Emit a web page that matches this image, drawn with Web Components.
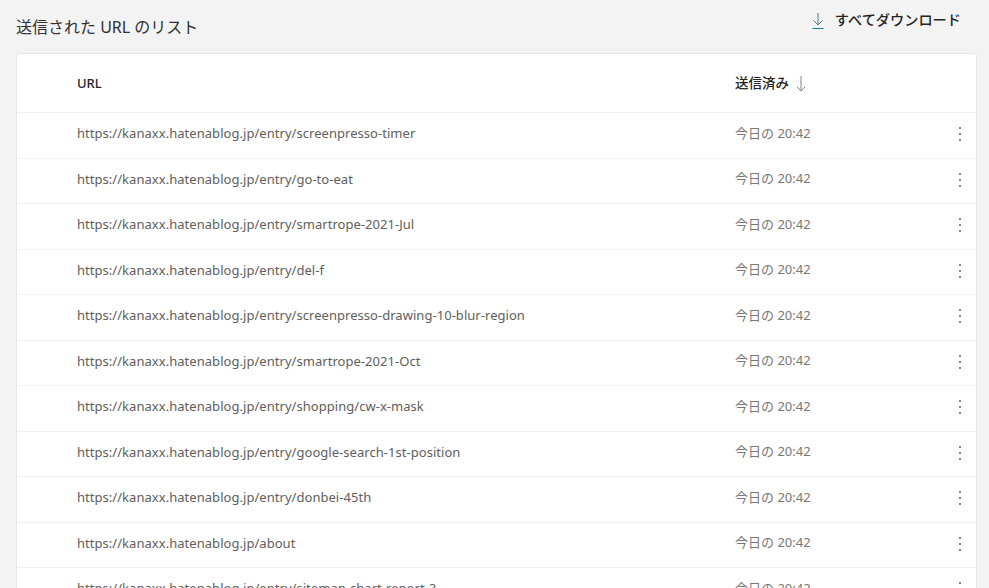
<!DOCTYPE html>
<html lang="ja">
<head>
<meta charset="utf-8">
<title>送信された URL のリスト</title>
<style>
  html, body { margin: 0; height: 588px; overflow: hidden; background: #f3f3f3; }
  body { font-family: "Noto Sans", "Noto Sans CJK JP", sans-serif; }
</style>
</head>
<body>
<url-panel>
  <url-row url="https://kanaxx.hatenablog.jp/entry/screenpresso-timer"></url-row>
  <url-row url="https://kanaxx.hatenablog.jp/entry/go-to-eat"></url-row>
  <url-row url="https://kanaxx.hatenablog.jp/entry/smartrope-2021-Jul"></url-row>
  <url-row url="https://kanaxx.hatenablog.jp/entry/del-f"></url-row>
  <url-row url="https://kanaxx.hatenablog.jp/entry/screenpresso-drawing-10-blur-region"></url-row>
  <url-row url="https://kanaxx.hatenablog.jp/entry/smartrope-2021-Oct"></url-row>
  <url-row url="https://kanaxx.hatenablog.jp/entry/shopping/cw-x-mask"></url-row>
  <url-row url="https://kanaxx.hatenablog.jp/entry/google-search-1st-position"></url-row>
  <url-row url="https://kanaxx.hatenablog.jp/entry/donbei-45th"></url-row>
  <url-row url="https://kanaxx.hatenablog.jp/about"></url-row>
  <url-row url="https://kanaxx.hatenablog.jp/entry/sitemap-chart-report-3"></url-row>
</url-panel>

<script>
// arrows for the download button and the sort header
const downloadIcon = `
  <svg width="14" height="20" viewBox="0 0 14 20" fill="none">
    <path d="M7 3V15M2.5 10.5L7 15l4.5-4.5" stroke="#5f7480"/>
    <path d="M1.5 18.5h11" stroke="#0f7c9c"/>
  </svg>`;
const sortIcon = `
  <svg width="14" height="20" viewBox="0 0 14 20" fill="none">
    <path d="M7 3V18M3 14L7 18l4-4" stroke="#8a8270"/>
  </svg>`;

class UrlPanel extends HTMLElement {
  constructor() {
    super();
    const shadow = this.attachShadow({ mode: 'open' });
    shadow.innerHTML = `
      <style>
        :host { display: block; padding: 0 12px 0 16px; }
        header { display: flex; justify-content: space-between; height: 53px; }
        h2 { margin: 15px 0 0; font-size: 16px; line-height: 24px; font-weight: 400; color: #323130; }
        button {
          display: flex; align-items: center; gap: 10px; height: 20px;
          margin: 10px 16px 0 0; padding: 0; border: 0; background: none;
          font-family: inherit; font-size: 14.2px; line-height: 20px; font-weight: 500; color: #252423;
        }
        .card {
          background: #fff; border-radius: 3px; height: 600px; overflow: hidden;
          border: 1px solid #e6e6e6; border-width: 1px 1px 0; box-sizing: border-box;
        }
        .head {
          display: flex; align-items: center; box-sizing: border-box; height: 59px;
          border-bottom: 1px solid #f0f0f0;
          font-size: 13px; font-weight: 500; color: #252423;
        }
        .head .u { margin-left: 60px; width: 658px; }
        .head .d { display: flex; align-items: center; gap: 5px; font-size: 13.5px; }
        .head .d span { margin-bottom: 2px; }
      </style>
      <header>
        <h2>送信された URL のリスト</h2>
        <button>${downloadIcon}すべてダウンロード</button>
      </header>
      <div class="card">
        <div class="head">
          <span class="u">URL</span>
          <div class="d"><span>送信済み</span>${sortIcon}</div>
        </div>
        <slot></slot>
      </div>`;
  }
}

class UrlRow extends HTMLElement {
  constructor() {
    super();
    const shadow = this.attachShadow({ mode: 'open' });
    shadow.innerHTML = `
      <style>
        :host {
          display: flex; align-items: center; height: 45.5px; box-sizing: border-box;
          padding-bottom: 4px;
          border-bottom: 1px solid #f0f0f0; font-size: 13px; color: #605e5c;
        }
        .u { margin-left: 60px; width: 658px; white-space: nowrap; letter-spacing: .04px; }
        .d { flex: 1; color: #797775; margin-bottom: 2px; }
        svg { margin: 2px 9px 0 0; }
      </style>
      <span class="u"></span>
      <span class="d">今日の 20:42</span>
      <svg width="14" height="16" viewBox="0 0 14 16" fill="#8a8886">
        <rect x="6" y="1" width="2" height="2"/><rect x="6" y="7" width="2" height="2"/><rect x="6" y="13" width="2" height="2"/>
      </svg>`;
    shadow.querySelector('.u').textContent = this.getAttribute('url');
  }
}

customElements.define('url-panel', UrlPanel);
customElements.define('url-row', UrlRow);
</script>
</body>
</html>
